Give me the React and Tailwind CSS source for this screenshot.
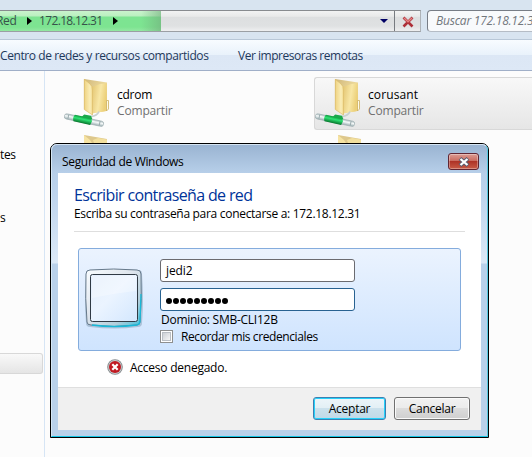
import React from 'react';

function NetworkFolder() {
  return (
    <svg width="46" height="50" viewBox="0 0 46 50" className="block shrink-0">
      <defs>
        <linearGradient id="folderFront" x1="0" x2="1" y1="0" y2="0.3">
          <stop offset="0" stopColor="#e3c470" />
          <stop offset="0.6" stopColor="#f8e7a6" />
          <stop offset="1" stopColor="#ecd07a" />
        </linearGradient>
        <linearGradient id="folderBack" x1="0" x2="1" y1="0" y2="1">
          <stop offset="0" stopColor="#cfb67a" />
          <stop offset="0.5" stopColor="#ecd89a" />
          <stop offset="1" stopColor="#e8c965" />
        </linearGradient>
        <linearGradient id="flap" x1="0" x2="1" y1="0" y2="0">
          <stop offset="0" stopColor="#efd382" />
          <stop offset="0.7" stopColor="#faedb8" />
          <stop offset="1" stopColor="#f1d98c" />
        </linearGradient>
        <linearGradient id="pipe" x1="0" x2="0" y1="0" y2="1">
          <stop offset="0" stopColor="#aebdc0" />
          <stop offset="0.4" stopColor="#f6fafa" />
          <stop offset="1" stopColor="#9baeb2" />
        </linearGradient>
        <linearGradient id="cable" x1="0" x2="0" y1="0" y2="1">
          <stop offset="0" stopColor="#0c9a3c" />
          <stop offset="0.4" stopColor="#2fe274" />
          <stop offset="1" stopColor="#06752b" />
        </linearGradient>
      </defs>
      <path d="M20 1 L43 4.500 V32 L42 33 L28 35 L20 31Z" fill="url(#folderBack)" />
      <path d="M28 9 L36 6 L42.500 5.500 V33 L28 35.500Z" fill="url(#folderFront)" />
      <path d="M20.300 1.300 L26 6 Q28.500 8 28.500 12 V37 L20.300 31.500Z" fill="url(#flap)" stroke="#dcbd6a" strokeWidth=".7" />
      <path d="M42.500 22.500h2v8.500l-2 2z" fill="#fffbe9" stroke="#cdb060" strokeWidth=".8" />
      <path d="M27 38.500 q6-.5 8-5" stroke="#c9d0d0" strokeWidth="1.800" fill="none" />
      <g transform="rotate(12 20 42)">
        <rect x="0" y="39.500" width="40" height="5.200" rx="2.400" fill="url(#pipe)" stroke="#9fafb2" strokeWidth=".7" />
        <path d="M10 38.800h17l1 3-1 3.700H10q-2-3.500 0-6.700Z" fill="url(#cable)" />
        <path d="M19 36.500h7l2 3h-11Z" fill="#19a94b" />
        <path d="M4 40v4M36 40v4" stroke="#8fa1a5" strokeWidth=".8" />
      </g>
    </svg>
  );
}

function FolderTop() {
  return (
    <div className="h-2 w-6 overflow-hidden">
      <svg width="24" height="8" viewBox="0 0 24 8">
        <path d="M0 0 L23 4 V8H0Z" fill="#dec88c" />
        <path d="M9 5 L14 3 L23 4.500V8H10Z" fill="#f2df9d" />
        <path d="M0 0 L6 5 L8 8H0Z" fill="#f6e3a2" />
      </svg>
    </div>
  );
}

function ShareLabel({ name, tracking }) {
  return (
    <div className="ml-[7px] pt-[9px] text-[12px] leading-4">
      <div className={tracking}>{name}</div>
      <div className="tracking-[-0.16px] text-[#707070]">Compartir</div>
    </div>
  );
}

function AddressBar() {
  return (
    <div className="mt-[10px] flex h-[22px] shrink-0">
      <div className="flex w-[421px] shrink-0 border border-l-0 border-[#888b8f] border-r-[#aeb3b8] border-b-[#9b9fa4] bg-[linear-gradient(#f2f3f3_0%,#e8e9e9_27%,#dddfe0_30%,#dfe1e2_75%,#eeeff0_100%)]">
        <div className="relative flex w-[161px] items-center bg-[linear-gradient(#c9f3cd_0%,#b9efbf_26%,#7de492_29%,#7de491_80%,#93e8a3_100%)] text-[12px] text-[#38524a]">
          <div className="absolute inset-y-0 right-0 w-5 bg-gradient-to-r from-transparent to-[#72ad7c]/60" />
          <span className="relative -ml-[4px] w-[21px] whitespace-nowrap tracking-[-0.3px]">Red</span>
          <svg width="5" height="8" viewBox="0 0 5 8" className="ml-[10px] shrink-0"><path d="M0 0L5 4L0 8Z" fill="#000" /></svg>
          <span className="relative ml-[7px] w-[65px] whitespace-nowrap tracking-[-0.65px]">172.18.12.31</span>
          <svg width="5" height="8" viewBox="0 0 5 8" className="ml-[9px] shrink-0"><path d="M0 0L5 4L0 8Z" fill="#000" /></svg>
        </div>
        <div className="flex w-[234px] items-center justify-end border-r border-[#777b80] pr-[6px]">
          <svg width="8" height="4" viewBox="0 0 8 4"><path d="M0 0H8L4 4Z" fill="#000064" /></svg>
        </div>
        <div className="flex flex-1 items-center justify-center">
          <svg width="12" height="12" viewBox="0 0 12 12" className="mt-[2px]">
            <path d="M1.500 1.500L10.500 10.500M10.500 1.500L1.500 10.500" stroke="#ad2f38" strokeWidth="2.600" />
            <path d="M2 2L6 5.700L10 2" stroke="#e58282" strokeWidth="1.500" fill="none" />
          </svg>
        </div>
      </div>
      <div className="ml-[6px] w-[110px] shrink-0 rounded-sm border border-[#777d86] border-b-[#b5bcc5] bg-[#f8fafc] pl-[8px] text-[12px] leading-[20px] whitespace-nowrap text-[#72777c] italic tracking-[-0.22px]">
        Buscar 172.18.12.31
      </div>
    </div>
  );
}

function CredentialPanel() {
  return (
    <div className="ml-[20px] flex h-[103px] w-[383px] rounded-[3px] border border-[#84acdd] bg-gradient-to-b from-[#ebf3fe] to-[#cfe4fe]">
      <svg width="60" height="62" viewBox="0 0 60 62" className="mt-[19px] ml-[5px] shrink-0">
        <defs>
          <linearGradient id="frame" x1="0" x2="1" y1="0" y2="1">
            <stop offset="0" stopColor="#fafdff" />
            <stop offset=".45" stopColor="#dde4ec" />
            <stop offset=".75" stopColor="#b3cfdc" />
            <stop offset="1" stopColor="#3fc0dc" />
          </linearGradient>
          <linearGradient id="glass" x1="0" x2="1" y1="0" y2="1">
            <stop offset="0" stopColor="#e3edfb" />
            <stop offset=".45" stopColor="#ebf4ff" />
            <stop offset="1" stopColor="#d3e7fe" />
          </linearGradient>
        </defs>
        <path d="M5 2Q30 0 55 2Q58 2 58 6Q60 31 58 55Q58 59 54 59Q30 62 6 59Q2 59 2 55Q0 31 2 6Q2 2 5 2Z" fill="#7995ae" opacity=".45" />
        <path d="M6 2Q30 0 53 2Q57 2 57 6Q58 31 56 54Q56 57 53 57Q30 60 7 57Q3 57 3 54Q1 31 2 6Q2 2 6 2Z" fill="url(#frame)" stroke="#66798b" strokeWidth="1" />
        <path d="M8 57Q30 60 53 57Q56 56 56 53L57 26" fill="none" stroke="#18b9d8" strokeWidth="1.300" />
        <rect x="6.500" y="6.500" width="47" height="47" rx="2" fill="url(#glass)" stroke="#303a44" />
        <path d="M8 8H52V23Q32 25 8 30Z" fill="#fff" opacity=".3" />
      </svg>
      <div className="ml-[16px] pt-[10px] text-[12px]">
        <div className="h-[23px] w-[195px] rounded-[3px] border border-[#6b6b70] bg-white pl-[5px] leading-[22px] tracking-[-0.1px]">jedi2</div>
        <div className="mt-[6px] flex h-[23px] w-[195px] items-center gap-px rounded-[3px] border border-[#286291] bg-white pt-[2px] pl-[5px]">
          {Array.from({ length: 9 }, (_, i) => (
            <span key={i} className="size-[6px] rounded-full bg-black" />
          ))}
        </div>
        <div className="h-[17px] pl-px leading-[18px] whitespace-nowrap tracking-[-0.26px]">Dominio: SMB-CLI12B</div>
        <div className="flex h-[16px] items-center whitespace-nowrap tracking-[-0.4px]">
          <span className="size-[13px] border border-[#8e8f8f] bg-white p-px">
            <span className="block size-full border border-[#b9bec4] bg-gradient-to-br from-[#ccd0d5] to-[#f6f6f6]" />
          </span>
          <span className="ml-[8px] pt-px">Recordar mis credenciales</span>
        </div>
      </div>
    </div>
  );
}

function SecurityDialog() {
  return (
    <div className="absolute top-[143px] left-[50px] h-[295px] w-[439px] rounded-t-[7px] border border-black bg-[#b9d1ea]">
      <div className="flex h-full flex-col rounded-t-[6px] border border-t-[#d6e5f3] border-r-[#55c8df] border-b-[#13c5e5] border-l-[#d5e7f5] bg-[linear-gradient(#9ab4d2_0px,#b7cfe9_28px,#bed4ed_50px,#dce9f7_118px,#b9d1ea_119px)] px-[6px] pb-[6px]">
        <div className="flex h-[28px] shrink-0 pl-[4px] text-[12px]">
          <span className="pt-[9px] leading-4 tracking-[-0.32px]">Seguridad de Windows</span>
          <div className="mt-[8px] mr-[2px] ml-auto flex h-[17px] w-[31px] items-center justify-center rounded-[3px] border border-[#612532] bg-[linear-gradient(#dc9c93_0%,#ca6c60_45%,#ae3327_50%,#c85b46_100%)] shadow-[inset_0_0_0_1px_#ffffff55]">
            <svg width="12" height="10" viewBox="0 0 12 10">
              <path d="M2 1.500L10 8.500M10 1.500L2 8.500" stroke="#595d70" strokeWidth="4" />
              <path d="M2.500 2L9.500 8M9.500 2L2.500 8" stroke="#fff" strokeWidth="2.300" />
            </svg>
          </div>
        </div>
        <div className="flex min-h-0 flex-1 flex-col bg-white">
          <div className="ml-[16px] pt-[12px] text-[16px] leading-5 tracking-[-0.65px] text-[#003399]">Escribir contraseña de red</div>
          <div className="ml-[16px] pt-px text-[12px] leading-4 tracking-[-0.3px]">Escriba su contraseña para conectarse a: 172.18.12.31</div>
          <div className="mt-[9px] mb-[16px] ml-[16px] h-px w-[391px] shrink-0 bg-[#dedede]" />
          <CredentialPanel />
          <div className="mt-[8px] ml-[49px] flex h-4 items-center text-[12px] leading-4">
            <svg width="16" height="16" viewBox="0 0 16 16">
              <circle cx="8" cy="8" r="7.800" fill="#85898c" />
              <circle cx="8" cy="8" r="6.900" fill="#c6cacc" />
              <circle cx="8" cy="8" r="6" fill="#c11a22" />
              <path d="M5.300 5.300L10.700 10.700M10.700 5.300L5.300 10.700" stroke="#fff" strokeWidth="2.200" />
            </svg>
            <span className="ml-[7px] pt-px tracking-[-0.24px]">Acceso denegado.</span>
          </div>
          <div className="mt-auto flex h-[43px] shrink-0 justify-end gap-[8px] border-t border-[#dfdfdf] bg-[#f0f0f0] pt-[9px] pr-[11px] text-[12px]">
            <div className="flex h-[23px] w-[73px] items-center justify-center rounded-[3px] border border-[#3c7fb1] bg-[linear-gradient(#edf5f9_0%,#e2eff5_49%,#cbe1ec_50%,#c1d9e7_100%)] tracking-[-0.25px] shadow-[inset_0_0_0_1px_#25d1fa]">Aceptar</div>
            <div className="flex h-[23px] w-[76px] items-center justify-center rounded-[3px] border border-[#707070] bg-[linear-gradient(#f2f2f2_0%,#ebebeb_49%,#dcdcdc_50%,#cfcfcf_100%)] tracking-[-0.25px] shadow-[inset_0_0_0_1px_#fafafa]">Cancelar</div>
          </div>
        </div>
      </div>
    </div>
  );
}

export default function App() {
  return (
    <div className="relative flex h-[457px] w-[532px] flex-col overflow-hidden bg-[#d8e4f0] font-['Open_Sans','Noto_Sans',sans-serif] text-black">
      <AddressBar />
      <div className="mt-[7px] flex h-[32px] shrink-0 border-t border-b border-t-[#b8c7d7] border-b-[#a0afc8] bg-[linear-gradient(#f8fcff_0%,#e9f2fb_49%,#dce7f5_50%,#dde8f6_100%)] text-[12px] leading-[31px] whitespace-nowrap text-[#1e395b]">
        <span className="w-[238px] tracking-[-0.41px]">Centro de redes y recursos compartidos</span>
        <span className="tracking-[-0.47px]">Ver impresoras remotas</span>
      </div>
      <div className="flex min-h-0 flex-1 bg-[#fcfcfc]">
        <div className="w-[45px] shrink-0 border-r border-[#d6e5f5] text-[12px] leading-4">
          <div className="pt-[76px] tracking-[-0.4px]">tes</div>
          <div className="pt-[47px]">s</div>
          <div className="mt-[127px] h-[21px] w-[43px] rounded-r-[3px] border border-l-0 border-[#d8d8d8] bg-gradient-to-b from-[#f9f9f9] to-[#e5e5e5]" />
        </div>
        <div className="grid h-[80px] w-[487px] shrink-0 grid-cols-[250px_237px]">
          <div>
            <div className="mt-[7px] ml-[19px] flex h-[51px]"><NetworkFolder /><ShareLabel name="cdrom" tracking="tracking-[-0.25px]" /></div>
            <div className="pt-[6px] pl-[39px]"><FolderTop /></div>
          </div>
          <div className="ml-[19px]">
            <div className="mt-[6px] flex h-[53px] rounded-l-[3px] border border-r-0 border-[#d8d8d8] bg-gradient-to-b from-[#f8f8f8] to-[#e6e6e6]"><NetworkFolder /><ShareLabel name="corusant" tracking="tracking-[0.1px]" /></div>
            <div className="pt-[5px] pl-[24px]"><FolderTop /></div>
          </div>
        </div>
      </div>
      <SecurityDialog />
    </div>
  );
}
